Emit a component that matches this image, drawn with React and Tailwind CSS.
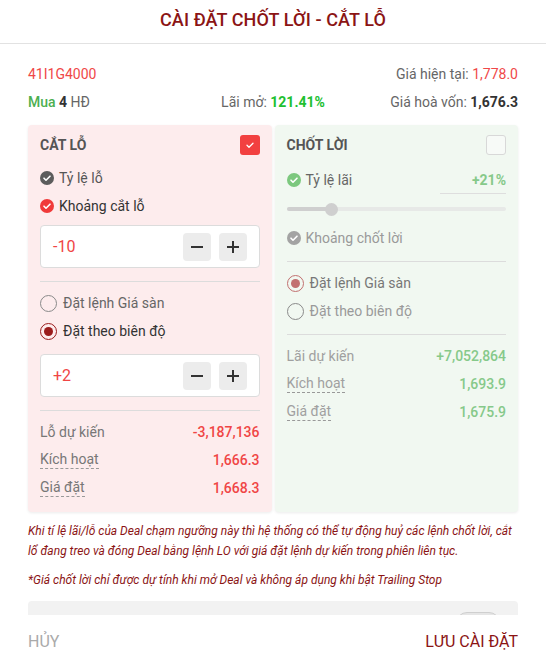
import { useState } from 'react';

const font = { fontFamily: 'Roboto, "Noto Sans", Arial, sans-serif' };

function CircleCheck({ color }) {
  return (
    <svg width="14" height="14" viewBox="0 0 14 14" className="shrink-0">
      <circle cx="7" cy="7" r="7" fill={color} />
      <path d="M4 7.2l2 2 4-4" stroke="#fff" strokeWidth="1.6" fill="none" strokeLinecap="round" strokeLinejoin="round" />
    </svg>
  );
}

function Radio({ checked, color = '#9b1c1c' }) {
  return (
    <span
      className="w-[17px] h-[17px] rounded-full border-[1.5px] flex items-center justify-center shrink-0"
      style={{ borderColor: checked ? color : '#8a8a8a' }}
    >
      {checked && <span className="w-[9px] h-[9px] rounded-full" style={{ background: color }} />}
    </span>
  );
}

function Stepper({ value }) {
  return (
    <div className="h-[43px] bg-white border border-[#dcdcdc] rounded-[4px] flex items-center pl-3 pr-3">
      <span className="flex-1 text-[16px] text-[#f04545]">{value}</span>
      <button className="w-7 h-7 rounded-[4px] bg-[#ececec] flex items-center justify-center">
        <span className="block w-[12px] h-[2px] bg-[#333]" />
      </button>
      <button className="ml-2 w-7 h-7 rounded-[4px] bg-[#ececec] flex items-center justify-center relative">
        <span className="block w-[12px] h-[2px] bg-[#333]" />
        <span className="absolute block w-[2px] h-[12px] bg-[#333]" />
      </button>
    </div>
  );
}

function Row({ label, value, dashed, labelColor, valueColor }) {
  return (
    <div className="h-7 flex items-center justify-between text-[14px]">
      <span
        className={dashed ? 'border-b border-dashed border-[#999] leading-[17px]' : ''}
        style={{ color: labelColor }}
      >
        {label}
      </span>
      <span className="font-medium" style={{ color: valueColor }}>{value}</span>
    </div>
  );
}

export default function App() {
  const [stopLoss, setStopLoss] = useState(true);
  const [takeProfit, setTakeProfit] = useState(false);

  return (
    <div className="w-[546px] h-[671px] bg-white flex flex-col overflow-hidden" style={font}>
      {/* Header */}
      <div className="h-[44px] shrink-0 border-b border-[#e2e2e2] flex items-center justify-center pb-[5px]">
        <h1 className="text-[18px] font-medium text-[#8b1414] tracking-[0.1px]">CÀI ĐẶT CHỐT LỜI - CẮT LỖ</h1>
      </div>

      {/* Body */}
      <div className="flex-1 overflow-hidden px-7 pt-4">
        <div className="h-7 flex items-center justify-between text-[14px]">
          <span className="text-[#f04848]">41I1G4000</span>
          <span className="text-[#666]">
            Giá hiện tại: <span className="text-[#f04848]">1,778.0</span>
          </span>
        </div>
        <div className="h-7 grid grid-cols-3 items-center text-[14px]">
          <span className="text-[#666]">
            <span className="text-[#4caf50] font-medium">Mua</span>{' '}
            <span className="text-[#333] font-bold">4</span> HĐ
          </span>
          <span className="text-center text-[#666] whitespace-nowrap">
            Lãi mở: <span className="text-[#20c030] font-bold">121.41%</span>
          </span>
          <span className="text-right text-[#666] whitespace-nowrap">
            Giá hoà vốn: <span className="text-[#333] font-bold">1,676.3</span>
          </span>
        </div>

        {/* Panels */}
        <div className="mt-[9px] grid grid-cols-2 gap-[3px]">
          {/* Cắt lỗ */}
          <div className="bg-[#fdeced] rounded-[4px] shadow-[0_1px_3px_rgba(0,0,0,0.08)] px-3 pt-[10px] pb-[10px]">
            <div className="h-5 flex items-center justify-between">
              <span className="text-[14px] font-bold text-[#555]">CẮT LỖ</span>
              <button
                onClick={() => setStopLoss(!stopLoss)}
                className="w-5 h-5 rounded-[3px] bg-[#f24040] flex items-center justify-center"
              >
                {stopLoss && (
                  <svg width="10" height="10" viewBox="0 0 10 10">
                    <path d="M2 5.2l2 2 4-4" stroke="#fff" strokeWidth="1.3" fill="none" strokeLinecap="round" strokeLinejoin="round" />
                  </svg>
                )}
              </button>
            </div>
            <div className="mt-[9px] h-7 flex items-center gap-[5px] text-[14px] text-[#555]">
              <CircleCheck color="#5c5c5c" />
              Tỷ lệ lỗ
            </div>
            <div className="h-7 flex items-center gap-[5px] text-[14px] text-[#333]">
              <CircleCheck color="#f03a3a" />
              Khoảng cắt lỗ
            </div>
            <div className="mt-[5px]">
              <Stepper value="-10" />
            </div>
            <div className="mt-[13px] h-px bg-[#dcdcdc]" />
            <div className="mt-[7px] h-7 flex items-center gap-[6px] text-[14px] text-[#666]">
              <Radio checked={false} />
              Đặt lệnh Giá sàn
            </div>
            <div className="h-7 flex items-center gap-[6px] text-[14px] text-[#333]">
              <Radio checked />
              Đặt theo biên độ
            </div>
            <div className="mt-[9px]">
              <Stepper value="+2" />
            </div>
            <div className="mt-[13px] h-px bg-[#dcdcdc]" />
            <div className="mt-[7px]">
              <Row label="Lỗ dự kiến" value="-3,187,136" labelColor="#777" valueColor="#f04545" />
              <Row label="Kích hoạt" value="1,666.3" dashed labelColor="#777" valueColor="#f04545" />
              <Row label="Giá đặt" value="1,668.3" dashed labelColor="#777" valueColor="#f04545" />
            </div>
          </div>

          {/* Chốt lời */}
          <div className="bg-[#f1f8f1] rounded-[4px] shadow-[0_1px_3px_rgba(0,0,0,0.08)] px-3 pt-[10px] pb-[10px]">
            <div className="h-5 flex items-center justify-between">
              <span className="text-[14px] font-bold text-[#555]">CHỐT LỜI</span>
              <button
                onClick={() => setTakeProfit(!takeProfit)}
                className="w-5 h-5 rounded-[3px] border border-[#d8d8d8] bg-[#f7faf7]"
              />
            </div>
            <div className="mt-[11px] h-7 flex items-center justify-between text-[14px]">
              <span className="flex items-center gap-[5px] text-[#666]">
                <CircleCheck color="#7cc87e" />
                Tỷ lệ lãi
              </span>
              <span className="w-[66px] h-7 text-right leading-7 font-bold text-[#86c98a] border-b border-[#dedede]">+21%</span>
            </div>
            <div className="h-[30px] flex items-center relative">
              <div className="w-full h-[4px] rounded-full bg-[#e7e9e7]" />
              <div className="absolute left-0 w-[44px] h-[4px] rounded-full bg-[#cfcfcf]" />
              <div className="absolute left-[38px] w-[13px] h-[13px] rounded-full bg-[#cfcfcf]" />
            </div>
            <div className="h-7 flex items-center gap-[5px] text-[14px] text-[#9a9a9a]">
              <CircleCheck color="#a3a3a3" />
              Khoảng chốt lời
            </div>
            <div className="mt-[9px] h-px bg-[#dcdcdc]" />
            <div className="mt-[7px] h-7 flex items-center gap-[6px] text-[14px] text-[#777]">
              <Radio checked color="#c27070" />
              Đặt lệnh Giá sàn
            </div>
            <div className="h-7 flex items-center gap-[6px] text-[14px] text-[#9a9a9a]">
              <Radio checked={false} />
              Đặt theo biên độ
            </div>
            <div className="mt-[9px] h-px bg-[#dcdcdc]" />
            <div className="mt-[7px]">
              <Row label="Lãi dự kiến" value="+7,052,864" labelColor="#a0a0a0" valueColor="#86c98a" />
              <Row label="Kích hoạt" value="1,693.9" dashed labelColor="#a0a0a0" valueColor="#86c98a" />
              <Row label="Giá đặt" value="1,675.9" dashed labelColor="#a0a0a0" valueColor="#86c98a" />
            </div>
          </div>
        </div>

        {/* Notes */}
        <p className="mt-[9px] text-[12px] leading-5 italic text-[#8b1414]">
          Khi tí lệ lãi/lỗ của Deal chạm ngưỡng này thì hệ thống có thể tự động huỷ các lệnh chốt lời, cắt lổ đang treo và đóng Deal bằng lệnh LO với giá đặt lệnh dự kiến trong phiên liên tục.
        </p>
        <p className="mt-[9px] text-[12px] leading-5 italic text-[#8b1414]">
          *Giá chốt lời chỉ được dự tính khi mở Deal và không áp dụng khi bật Trailing Stop
        </p>

        {/* Trailing stop (mostly under the footer) */}
        <div className="mt-[11px] h-[48px] bg-[#f2f2f2] rounded-[4px] pl-3 pr-[18px] pt-[11px] flex items-start justify-end">
          <span className="w-[44px] h-[22px] rounded-full border border-[#cfcfcf] bg-[#e6e6e6] flex items-center px-[2px]">
            <span className="w-4 h-4 rounded-full bg-white border border-[#cfcfcf]" />
          </span>
        </div>
      </div>

      {/* Footer */}
      <div className="h-[56px] shrink-0 bg-white px-7 flex items-center justify-between pb-[2px]">
        <button className="text-[16px] text-[#aaa]">HỦY</button>
        <button className="text-[16px] text-[#8b1414]">LƯU CÀI ĐẶT</button>
      </div>
    </div>
  );
}
